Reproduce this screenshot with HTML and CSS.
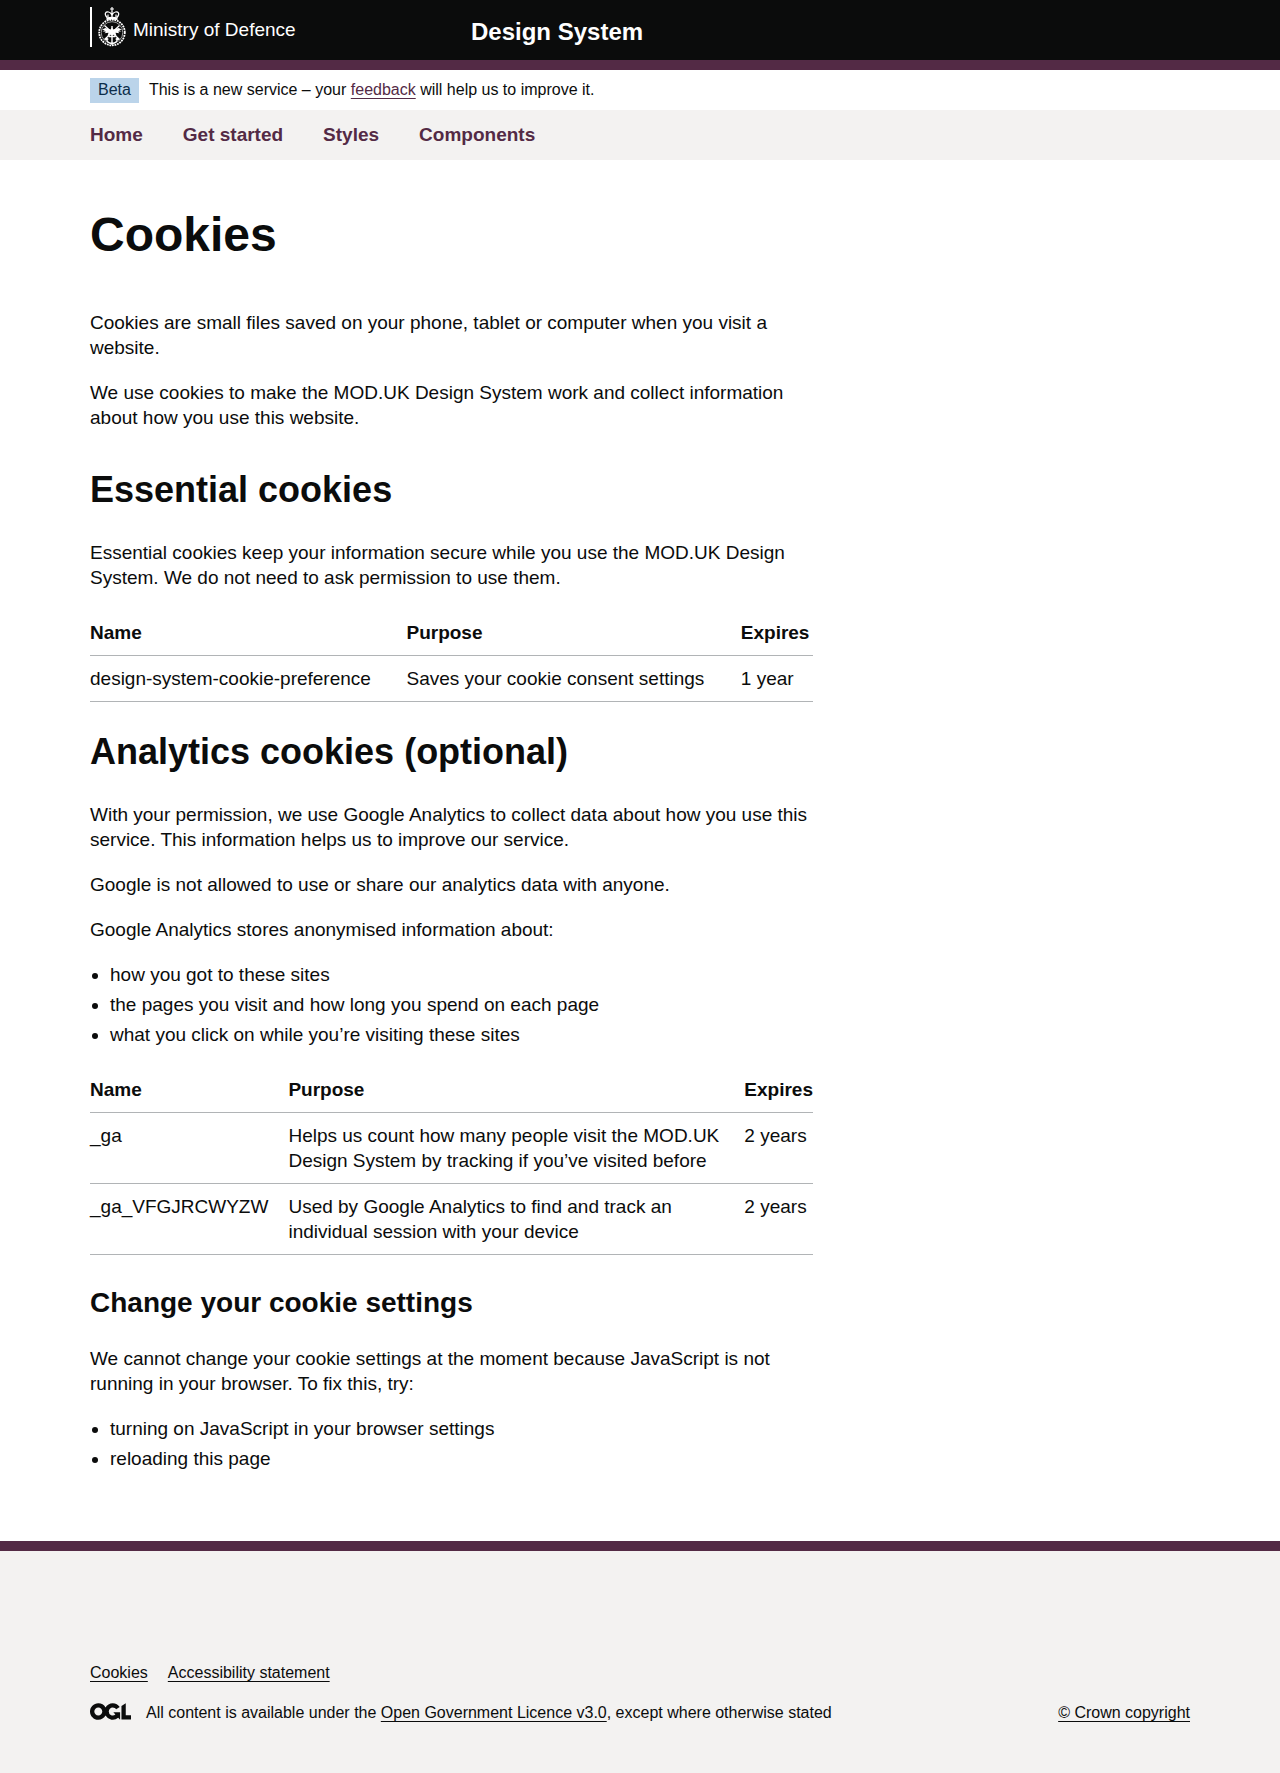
FILE: index.html
```html
<!DOCTYPE html>
<html lang="en">
<head>
<meta charset="utf-8">
<meta name="viewport" content="width=device-width, initial-scale=1">
<title>Cookies – MOD.UK Design System</title>
<link rel="stylesheet" href="styles.css">
</head>
<body>
<header class="header">
  <div class="container header__inner">
    <a class="header__logo" href="#">
      <svg class="crest" viewBox="0 0 28 40" width="28" height="40" aria-hidden="true" fill="none" stroke="#fff">
        <circle cx="14" cy="25.500" r="12.800" stroke-width="1.800" stroke-dasharray="1.800 .8"/>
        <circle cx="14" cy="25.500" r="10.800" stroke-width=".6"/>
        <path stroke-width="1.300" d="M6.500 18.500l15 14M21.500 18.500l-15 14"/>
        <path stroke-width="1.400" d="M14 19v19M10.500 29.500h7M8.500 31.500c.5 3.500 2.500 5 5.500 5s5-1.500 5.500-5M7.500 33l1-2 1.800 1.500M20.500 33l-1-2-1.800 1.500"/>
        <path fill="#fff" stroke="none" d="M14 20.500l1.500 2 5-1.500 3.500 1.500-3 .8 2.500 1-3.500.5 1.500 1.500-4-.5 1 3-3-1.500-1.500 1.500-1.500-1.500-3 1.500 1-3-4 .5L8 24.800l-3.500-.5 2.500-1-3-.8L7.500 21l5 1.500z"/>
        <path fill="#fff" stroke="none" d="M8.500 10.300c3.500-.9 7.500-.9 11 0v2.700c-3.500-.8-7.500-.8-11 0zM13.400 0h1.200v1.400H16v1.200h-1.400v1.600h-1.200V2.600H12V1.400h1.400z"/>
        <path stroke-width="1.200" d="M9 10.500C5.500 6.500 8 4.500 10.500 5s3.500 2 3.500 5c0-3 1-4.500 3.500-5s5 1.500 1.500 5.500M14 4v6M10 7.500v2.500M18 7.500v2.500"/>
      </svg>
      <span class="header__name">Ministry of Defence</span>
    </a>
    <a class="header__service" href="#">Design System</a>
  </div>
</header>

<div class="container phase">
  <strong class="phase__tag">Beta</strong>
  <span>This is a new service – your <a class="link" href="#">feedback</a> will help us to improve it.</span>
</div>

<nav class="nav" aria-label="Main">
  <ul class="container nav__list">
    <li><a href="#">Home</a></li>
    <li><a href="#">Get started</a></li>
    <li><a href="#">Styles</a></li>
    <li><a href="#">Components</a></li>
  </ul>
</nav>

<main class="container main">
  <div class="content">
    <h1>Cookies</h1>
    <p>Cookies are small files saved on your phone, tablet or computer when you visit a website.</p>
    <p>We use cookies to make the MOD.UK Design System work and collect information about how you use this website.</p>

    <h2>Essential cookies</h2>
    <p>Essential cookies keep your information secure while you use the MOD.UK Design System. We do not need to ask permission to use them.</p>
    <table>
      <thead>
        <tr><th scope="col">Name</th><th scope="col">Purpose</th><th scope="col">Expires</th></tr>
      </thead>
      <tbody>
        <tr><td>design-system-cookie-preference</td><td>Saves your cookie consent settings</td><td>1 year</td></tr>
      </tbody>
    </table>

    <h2>Analytics cookies (optional)</h2>
    <p>With your permission, we use Google Analytics to collect data about how you use this service. This information helps us to improve our service.</p>
    <p>Google is not allowed to use or share our analytics data with anyone.</p>
    <p>Google Analytics stores anonymised information about:</p>
    <ul class="bullets">
      <li>how you got to these sites</li>
      <li>the pages you visit and how long you spend on each page</li>
      <li>what you click on while you’re visiting these sites</li>
    </ul>
    <table>
      <thead>
        <tr><th scope="col">Name</th><th scope="col">Purpose</th><th scope="col">Expires</th></tr>
      </thead>
      <tbody>
        <tr><td>_ga</td><td>Helps us count how many people visit the MOD.UK Design System by tracking if you’ve visited before</td><td>2 years</td></tr>
        <tr><td>_ga_VFGJRCWYZW</td><td>Used by Google Analytics to find and track an individual session with your device</td><td>2 years</td></tr>
      </tbody>
    </table>

    <h3>Change your cookie settings</h3>
    <p>We cannot change your cookie settings at the moment because JavaScript is not running in your browser. To fix this, try:</p>
    <ul class="bullets">
      <li>turning on JavaScript in your browser settings</li>
      <li>reloading this page</li>
    </ul>
  </div>
</main>

<footer class="footer">
  <div class="container">
    <ul class="footer__links">
      <li><a class="link" href="#">Cookies</a></li>
      <li><a class="link" href="#">Accessibility statement</a></li>
    </ul>
    <div class="footer__meta">
      <svg class="ogl" viewBox="0 0 483.2 195.7" width="41" height="17" aria-hidden="true"><path fill="currentColor" d="M421.5 142.8V.1l-50.7 32.3v161.1h112.4v-50.7zm-122.3-9.6A47.12 47.12 0 0 1 221 97.8c0-26 21.1-47.1 47.1-47.1 16.7 0 31.4 8.7 39.7 21.8l42.7-27.2A97.63 97.63 0 0 0 268.1 0c-36.5 0-68.3 20.1-85.1 49.7A98 98 0 0 0 97.8 0C43.9 0 0 43.9 0 97.8s43.9 97.8 97.8 97.8c36.5 0 68.3-20.1 85.1-49.7a97.76 97.76 0 0 0 149.6 25.4l19.4 22.2h3v-87.8h-80l24.3 27.5zM97.8 145c-26 0-47.1-21.1-47.1-47.1s21.1-47.1 47.1-47.1 47.1 21.1 47.1 47.1S123.8 145 97.8 145"/></svg>
      <span class="footer__licence">All content is available under the <a class="link" href="#">Open Government Licence v3.0</a>, except where otherwise stated</span>
      <a class="link" href="#">© Crown copyright</a>
    </div>
  </div>
</footer>
</body>
</html>
```
FILE: styles.css
```css
:root {
  --ink: #0b0c0c;
  --brand: #532a45;
  --panel: #f3f2f1;
  --rule: #b1b4b6;
}

* { box-sizing: border-box; }

body {
  margin: 0;
  background: #fff;
  color: var(--ink);
  font-family: "Liberation Sans", Arial, sans-serif;
  font-size: 19px;
  line-height: 25px;
}

.container {
  max-width: 1160px;
  margin: 0 auto;
  padding: 0 30px;
}

.link {
  color: inherit;
  text-decoration: underline;
  text-decoration-thickness: 1px;
  text-underline-offset: 3px;
}

.header {
  background: var(--ink);
  border-bottom: 10px solid var(--brand);
}

.header a {
  color: #fff;
  text-decoration: none;
}

.header__inner {
  display: grid;
  grid-template-columns: 381px 1fr;
  align-items: start;
  min-height: 60px;
  padding-top: 7px;
}

.header__logo {
  display: flex;
  align-items: flex-start;
  gap: 7px;
  height: 40px;
  padding-left: 6px;
  border-left: 2px solid #fff;
}

.crest { flex: none; }

.header__name { line-height: 46px; }

.header__service {
  padding-top: 10px;
  font-size: 24px;
  font-weight: bold;
  line-height: 30px;
}

.phase {
  display: flex;
  align-items: center;
  gap: 10px;
  min-height: 40px;
  font-size: 16px;
  line-height: 20px;
}

.phase__tag {
  padding: 2px 8px 3px;
  background: #bbd4ea;
  color: #0c2d4a;
  font-weight: normal;
}

.phase .link { color: var(--brand); }

.nav { background: var(--panel); }

.nav__list {
  display: flex;
  flex-wrap: wrap;
  column-gap: 40px;
  list-style: none;
}

.nav__list a {
  display: block;
  color: var(--brand);
  font-weight: bold;
  line-height: 50px;
  text-decoration: none;
}

.main {
  padding-top: 50px;
  padding-bottom: 50px;
}

.content { max-width: 723px; }

h1 {
  margin: 0 0 50px;
  font-size: 48px;
  line-height: 50px;
}

h2 {
  margin: 30px 0;
  font-size: 36px;
  line-height: 40px;
}

p + h2 { margin-top: 40px; }

h3 {
  margin: 30px 0 25px;
  font-size: 28px;
  line-height: 36px;
}

p { margin: 0 0 20px; }

.bullets {
  margin: 0 0 20px;
  padding-left: 20px;
}

.bullets li + li { margin-top: 5px; }

table {
  width: 100%;
  border-collapse: collapse;
}

th,
td {
  padding: 10px 20px 10px 0;
  border-bottom: 1px solid var(--rule);
  text-align: left;
  vertical-align: top;
}

th:last-child,
td:last-child { padding-right: 0; }

.footer {
  padding: 112px 0 50px;
  background: var(--panel);
  border-top: 10px solid var(--brand);
  font-size: 16px;
  line-height: 20px;
}

.footer__links {
  display: flex;
  flex-wrap: wrap;
  gap: 20px;
  margin: 0 0 20px;
  padding: 0;
  list-style: none;
}

.footer__meta {
  display: flex;
  align-items: flex-start;
}

.ogl {
  flex: none;
  margin-right: 15px;
}

.footer__licence { flex: 1; }
```
